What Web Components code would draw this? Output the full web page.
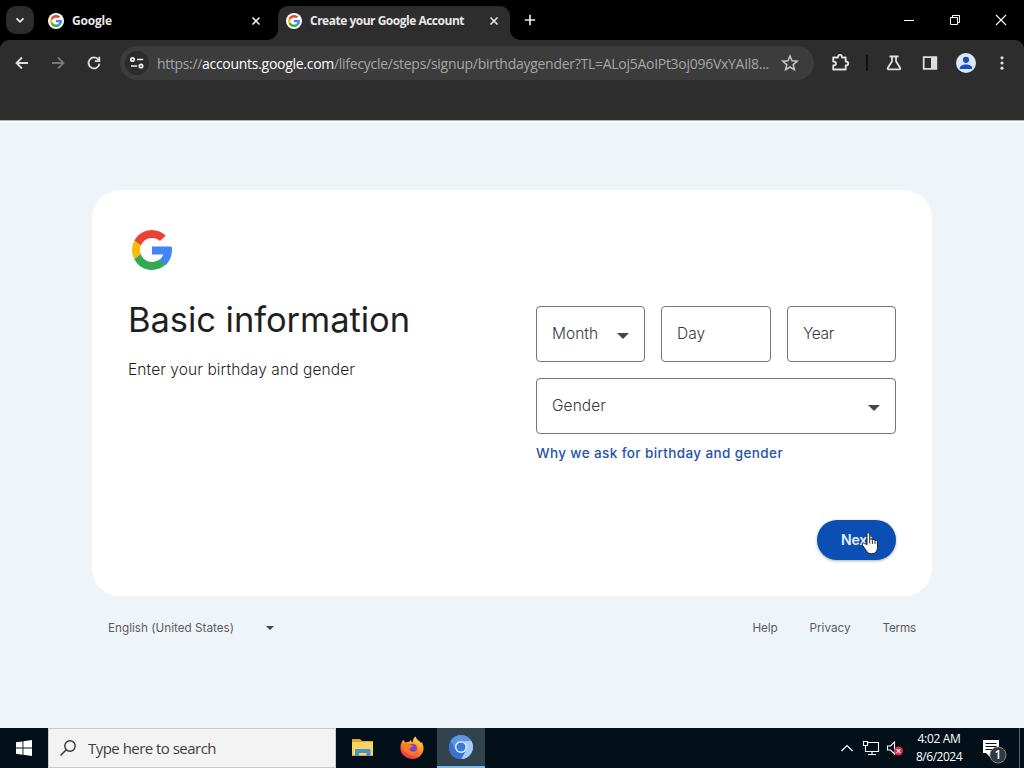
<!DOCTYPE html>
<html lang="en">
<head>
<meta charset="utf-8">
<title>Create your Google Account</title>
<style>
html,body{margin:0;height:100%;overflow:hidden;background:#eff4f9}
</style>
</head>
<body>
<desktop-screen></desktop-screen>
<script>
const define = (name, html, init) => {
  const t = document.createElement('template');
  t.innerHTML = html;
  customElements.define(name, class extends HTMLElement {
    connectedCallback() {
      if (this.shadowRoot) return;
      this.attachShadow({mode: 'open'}).append(t.content.cloneNode(true));
      if (init) init(this, this.shadowRoot);
    }
  });
};

// A run of text tracked so that it fills the width given in "w"
define('fit-text', `<style>:host{display:block;white-space:pre;flex:none}span{display:inline-block}</style><span><slot></slot></span>`,
  (host, root) => {
    const w = +host.getAttribute('w');
    const s = root.querySelector('span');
    const n = host.textContent.length;
    host.style.width = w + 'px';
    s.style.letterSpacing = ((w - s.getBoundingClientRect().width) / n) + 'px';
  });

define('google-g', `<style>:host{display:block;flex:none;width:var(--s,16px);height:var(--s,16px)}svg{display:block;width:100%;height:100%}</style>
<svg viewBox="4 4 40 40"><path fill="#4285f4" d="M43.600 20.500H24v8h11.300c-.8 2.200-2.200 4.200-4.100 5.600l6.200 5.200C37 39.700 44 34 44 24c0-1.300-.1-2.400-.4-3.500z"/><path fill="#ea4335" d="M6.300 14.700l6.600 4.800C14.700 15.100 19 12 24 12c3.100 0 5.800 1.200 8 3.100l5.700-5.700C34 6.100 29.300 4 24 4 16.300 4 9.700 8.300 6.300 14.700z"/><path fill="#34a853" d="M24 44c5.200 0 9.900-2 13.400-5.200l-6.200-5.200C29.200 35.100 26.700 36 24 36c-5.200 0-9.600-3.300-11.300-8l-6.500 5C9.500 39.600 16.200 44 24 44z"/><path fill="#fbbc05" d="M12.700 28c-.9-2.800-.9-5.700.2-8.500l-6.600-4.800C3.400 20.500 3.200 27.100 6.200 33z"/></svg>`);

define('browser-tab', `<style>
:host{display:flex;align-items:center;box-sizing:border-box;height:34px;width:232px;padding:0 7px 5px 8px;font:700 12px "Open Sans","Noto Sans",sans-serif;color:#e8e8e8;border-radius:10px 10px 0 0;position:relative;flex:none}
:host([active]){background:#2d2d2d}
:host([active])::before,:host([active])::after{content:"";position:absolute;bottom:0;width:10px;height:10px}
:host::before{left:-10px;background:radial-gradient(circle at 0 0,transparent 9.500px,#2d2d2d 10px)}
:host::after{right:-10px;background:radial-gradient(circle at 100% 0,transparent 9.500px,#2d2d2d 10px)}
.d{width:16px;height:16px;border-radius:50%;background:#fff;display:grid;place-items:center;margin-right:8px;--s:12px}
slot{display:block}svg{margin-left:auto}
</style><span class="d"><google-g></google-g></span><slot></slot><svg width="18" height="18" viewBox="0 0 18 18"><path d="M5.500 5.500l7 7m0-7l-7 7" stroke="#e8e8e8" stroke-width="1.600"/></svg>`);

define('tab-strip', `<style>
:host{display:flex;height:40px;background:#000;box-sizing:border-box;padding:6px 0 0 6px;align-items:flex-start}
.s{width:28px;height:28px;border-radius:10px;background:#2d2d2d;margin-right:6px;flex:none}
.n{margin:0 auto 0 6px}svg{display:block}.w{width:46px;height:28px}
browser-tab+browser-tab{margin-left:6px}
</style>
<svg class="s" viewBox="0 0 28 28"><path d="M10.500 12.300l3.500 3.500 3.500-3.500" fill="none" stroke="#eee" stroke-width="1.700"/></svg>
<browser-tab><fit-text w="40">Google</fit-text></browser-tab>
<browser-tab active><fit-text w="154">Create your Google Account</fit-text></browser-tab>
<svg class="n" width="28" height="28" viewBox="0 0 28 28"><path d="M14 8.800v10.400M8.800 14h10.400" stroke="#e8e8e8" stroke-width="1.700"/></svg>
<svg class="w" viewBox="0 0 46 28"><path d="M18 14.500h10" stroke="#fff"/></svg>
<svg class="w" viewBox="0 0 46 28"><path d="M18.500 11.500h7v7h-7zM20.500 11.500v-2h7v7h-2" fill="none" stroke="#fff"/></svg>
<svg class="w" viewBox="0 0 46 28"><path d="M18 9l10 10m0-10l-10 10" stroke="#fff" stroke-width="1.100"/></svg>`);

define('browser-toolbar', `<style>
:host{display:flex;flex-direction:column;background:#000;border-bottom:1px solid #b4b4b4;box-sizing:border-box;height:81px}
.bg{background:#2d2d2d;border-radius:9px 9px 0 0;flex:1;padding:6px 4px 0;display:flex;align-items:flex-start}
svg{display:block;flex:none}.i{width:36px;height:34px;fill:none;stroke:#dedede;stroke-width:1.800}
.pill{display:flex;align-items:center;width:694px;height:34px;border-radius:17px;background:#3c3c3c;margin:0 8px;box-sizing:border-box;padding-left:5px;font:14px "Open Sans","Noto Sans",sans-serif;color:#a6a6a6}
.pill b{font-weight:400;color:#fff}.t{margin-right:8px}
.sep{width:2px;height:16px;margin:9px 8px;background:#111}
</style><div class="bg">
<svg class="i" viewBox="0 0 36 34"><path d="M24 17H13M18 11.500L12.500 17l5.500 5.500"/></svg>
<svg class="i" style="stroke:#777" viewBox="0 0 36 34"><path d="M12 17h11M18 11.500l5.500 5.500-5.500 5.500"/></svg>
<svg class="i" viewBox="0 0 36 34"><path d="M22.500 13.700A5.500 5.500 0 1 0 23.500 17.700M23.300 10.800v4.300h-4.500"/></svg>
<div class="pill"><svg class="t" width="24" height="24" viewBox="0 0 24 24"><circle cx="12" cy="12" r="12" fill="#2b2b2b"/><g fill="none" stroke="#f0f0f0" stroke-width="1.700"><circle cx="7.500" cy="8.500" r="1.700"/><circle cx="16" cy="15" r="1.700"/><path d="M12 8.500h6.200M6 15h6.200"/></g></svg>
<fit-text w="45">https://</fit-text><b><fit-text w="132">accounts.google.com</fit-text></b><fit-text w="435">/lifecycle/steps/signup/birthdaygender?TL=ALoj5AoIPt3oj096VxYAIl8...</fit-text>
<svg width="42" height="34" viewBox="0 0 42 34"><path d="M21 10l2 4.800 5.200.400-4 3.400 1.200 5.100L21 21l-4.400 2.700 1.200-5.100-4-3.400 5.200-.4z" fill="none" stroke="#c8c8c8" stroke-width="1.500"/></svg></div>
<svg class="i" viewBox="0 0 36 34"><path d="M11.200 11.500H16c0-3.400 4-3.400 4 0h3.700v4c3.400 0 3.400 4 0 4v4H11.200v-4c3.700 0 3.700-4 0-4z" stroke-linejoin="round"/></svg>
<span class="sep"></span>
<svg class="i" viewBox="0 0 36 34"><path d="M13.500 10.500h9M16 10.500v4.800l-4.200 6.600q-.6 1.400 1 1.400h10.400q1.600 0 1-1.400L20 15.300v-4.800"/></svg>
<svg class="i" viewBox="0 0 36 34"><path d="M11.700 11.200h12.600v11.600H11.700z"/><path d="M19 11h5v12h-5z" fill="#dedede" stroke="none"/></svg>
<svg class="i" style="stroke:none" viewBox="0 0 36 34"><circle cx="18" cy="17" r="10" fill="#dbe7fb"/><circle cx="18" cy="13.800" r="3.100" fill="#1551b8"/><path d="M11.800 22.200c0-5 12.400-5 12.400 0v.8H11.800z" fill="#1551b8"/></svg>
<svg class="i" style="fill:#dedede;stroke:none" viewBox="0 0 36 34"><circle cx="18" cy="11.800" r="1.600"/><circle cx="18" cy="17" r="1.600"/><circle cx="18" cy="22.200" r="1.600"/></svg>
</div>`);

define('outlined-field', `<style>:host{display:flex;align-items:center;justify-content:space-between;box-sizing:border-box;height:56px;border:1px solid #747775;border-radius:4px;padding:0 15px;background:#fff;font:300 15.500px "Inter",sans-serif;color:#36393c}
slot{display:block;margin-bottom:1px}svg{display:none;margin:3px 0 0}:host([menu]) svg{display:block}</style><slot></slot><svg width="12" height="6" viewBox="0 0 12 6"><path d="M0 0h12L6 6z" fill="#444746"/></svg>`);

define('next-button', `<style>:host{display:flex;position:relative;width:79px;height:40px;box-sizing:border-box;padding:0 0 1px 24px;align-items:center;border-radius:20px;background:#0b4fb5;color:#e6effb;font:600 14px "Inter",sans-serif;box-shadow:0 1px 3px #0005}
svg{position:absolute;left:44px;top:12px}</style><fit-text w="31">Next</fit-text>
<svg width="18" height="23" viewBox="0 0 18 23"><path d="M6 12.500V2.200C6 .3 8.700.3 8.700 2.200v5.600c.3-1.500 2.600-1.300 2.700.4.400-1.200 2.500-1 2.600.6.600-1 2.500-.6 2.500 1v5.400c0 4-2.200 6.600-5.800 6.600-3 0-4.600-1.300-6-4L1.300 13c-.8-1.500.8-2.800 2.200-1.500z" fill="#fff" stroke="#111" stroke-width=".9"/><path d="M8.700 8v3.500M11.400 8.500V12M14 9v3" stroke="#111" stroke-width=".9"/></svg>`);

define('signup-card', `<style>
:host{display:grid;grid-template-columns:360px 360px;column-gap:48px;box-sizing:border-box;width:840px;height:406px;padding:36px;background:#fff;border-radius:28px;grid-template-rows:48px 1fr 40px}
google-g{--s:40px;margin:4px}
.l{grid-row:2;grid-column:1;padding-top:24px;color:#1f1f1f}
h1{margin:0;font:400 34.500px/44px "Inter",sans-serif}
p{margin:16px 0 0;font:300 15.500px/24px "Inter",sans-serif}
.r{grid-row:2;grid-column:2;padding-top:32px}
.f{display:grid;grid-template-columns:109px 110px 109px;gap:16px;margin-bottom:16px}
a{display:block;margin-top:8px;font:500 13.500px/22px "Inter",sans-serif;color:#2453a8}
next-button{grid-row:3;grid-column:2;justify-self:end}
</style><google-g></google-g>
<div class="l"><h1><fit-text w="282">Basic information</fit-text></h1><p><fit-text w="227">Enter your birthday and gender</fit-text></p></div>
<div class="r"><div class="f"><outlined-field menu><fit-text w="46">Month</fit-text></outlined-field><outlined-field><fit-text w="28">Day</fit-text></outlined-field><outlined-field><fit-text w="31">Year</fit-text></outlined-field></div>
<outlined-field menu><fit-text w="54">Gender</fit-text></outlined-field>
<a><fit-text w="247">Why we ask for birthday and gender</fit-text></a></div>
<next-button></next-button>`);

define('page-footer', `<style>:host{display:flex;align-items:center;width:808px;height:24px;margin-top:20px;font:11.700px "Inter",sans-serif;color:#5a5d60}
svg{margin:0 auto 0 32px}.g{display:flex;gap:32px}</style>
<fit-text w="126">English (United States)</fit-text><svg width="8" height="4" viewBox="0 0 8 4"><path d="M0 0h8L4 4z" fill="#444746"/></svg>
<div class="g"><fit-text w="25">Help</fit-text><fit-text w="41">Privacy</fit-text><fit-text w="33.500">Terms</fit-text></div>`);

define('task-bar', `<style>
:host{display:flex;height:40px;background:#03101a;color:#fff;font:12px "Open Sans","Noto Sans",sans-serif}
svg{display:block;flex:none}
.q{display:flex;align-items:center;width:288px;box-sizing:border-box;border:1px solid #c9c9ce;background:#f3f3f4;color:#3f3f3f;font-size:15px;padding-left:10px}
.q fit-text{margin-left:11px}
.a{width:48px;height:40px;margin-left:3px;box-sizing:border-box}.a+.a{margin-left:1px}
.on{background:#33434e;border-bottom:2px solid #76b9ed;display:grid;place-items:center}
.tray{display:flex;margin-left:auto;align-items:center}
.c{display:flex;flex-direction:column;align-items:center;line-height:18px;width:54px;margin:0 11px 0 5px}
.e{width:4px;border-left:1px solid #59636b;align-self:stretch}
</style>
<svg width="48" height="40" viewBox="0 0 48 40"><path fill="#fff" d="M16 14.300l6.500-.9v6.200H16zM23.400 13.200l8.600-1.200v7.600h-8.600zM16 20.500h6.500v6.200l-6.500-.9zM23.400 20.500H32V28l-8.600-1.200z"/></svg>
<div class="q"><svg width="18" height="18" viewBox="0 0 18 18"><g fill="none" stroke="#333" stroke-width="1.400"><circle cx="11" cy="7" r="5.200"/><path d="M7.300 10.700L1.500 16.500"/></g></svg><fit-text w="128">Type here to search</fit-text></div>
<svg class="a" viewBox="0 0 48 40"><path d="M13 11h8l2 2h11v15H13z" fill="#e5a91b"/><path d="M13 14h21v13H13z" fill="#f6d560"/><path d="M16 28v-6q0-1 1-1h13.500q1 0 1 1v6h-4v-3h-7.500v3z" fill="#4a94cd"/></svg>
<svg class="a" viewBox="0 0 48 40"><defs><linearGradient id="f" x1=".8" y1="0" x2=".3" y2="1"><stop stop-color="#ffe33d"/><stop offset=".45" stop-color="#ff9825"/><stop offset="1" stop-color="#f22456"/></linearGradient></defs><path d="M15 11.700l2.500 2.800q1.800-1 3.800-.7l1.500-1.800q.7 1.800 2.200 2.500c-.3-2.600.6-4.800 2.500-6 1.300 3.500 4 4 5.500 6.500l.7-1c2.700 5 2.500 9.500-.8 13.300-4 4.700-11.500 5-16.300 1-5-4-5.500-10.500-1.600-16.600z" fill="url(#f)"/><circle cx="24.500" cy="20.300" r="4.600" fill="#7a42c4"/><path d="M14.500 17q4-3 8.500 0l3 1.200q-4 .8-4.800 3c2 3.800 7.300 3 9.300-.8.5 5.500-5 8-9.500 6-4-1.600-6-5.400-6.500-9.400z" fill="#ff7a28"/></svg>
<div class="a on"><svg width="26" height="26" viewBox="-13 -13 26 26"><circle r="12" fill="#4b8ae6"/><path d="M0-12A12 12 0 0 0-10.400-6L-5.200 3 0-6h10.400A12 12 0 0 0 0-12z" fill="#5d96e3"/><path d="M10.400-6A12 12 0 0 1 0 12L5.200 3Q7-2 3-6z" fill="#a9cdfb"/><path d="M-10.400-6A12 12 0 0 0 0 12L5 3H-5z" fill="#3a74d2"/><circle r="6" fill="#eaf2ff"/><circle r="4.600" fill="#367be0"/></svg></div>
<div class="tray">
<svg width="24" height="40" viewBox="0 0 24 40"><path d="M6.500 23l5.500-5.500 5.500 5.500" fill="none" stroke="#fff" stroke-width="1.200"/></svg>
<svg width="24" height="40" viewBox="0 0 24 40"><path d="M8 14.500h11.500v9H6.500v-4M13 23.500v3M9 26.500h8M4.500 13.500h4v4h-4zM6.500 17.500v3" fill="none" stroke="#fff" stroke-width="1.100"/></svg>
<svg width="24" height="40" viewBox="0 0 24 40"><path d="M4.500 18h3l4-4v12l-4-4h-3z" fill="none" stroke="#fff" stroke-width="1.100"/><circle cx="15.500" cy="23" r="4.500" fill="#d92f3a"/><path d="M13.700 21.200l3.600 3.600m0-3.600l-3.600 3.600" stroke="#fff" stroke-width="1.200"/></svg>
<div class="c"><fit-text w="43">4:02 AM</fit-text><fit-text w="46">8/6/2024</fit-text></div>
<svg width="42" height="40" viewBox="0 0 42 40"><path d="M6 12h16v13h-9v4l-4-4H6z" fill="#fff"/><path d="M8.500 15.500h11M8.500 18.500h11M8.500 21.500h7" stroke="#03101a"/><circle cx="21" cy="27" r="8" fill="#303940" stroke="#7d858b"/><text x="21" y="31.300" text-anchor="middle" fill="#fff" style="font:600 12px 'Open Sans',sans-serif">1</text></svg>
<span class="e"></span></div>`);

define('desktop-screen', `<style>:host{display:flex;flex-direction:column;width:1024px;height:768px;overflow:hidden}
main{flex:1;background:#eff4f9;border-top:2px solid #fbfcfd;display:flex;flex-direction:column;align-items:center;padding-top:67px}</style>
<tab-strip></tab-strip><browser-toolbar></browser-toolbar>
<main><signup-card></signup-card><page-footer></page-footer></main><task-bar></task-bar>`);
</script>
</body>
</html>
